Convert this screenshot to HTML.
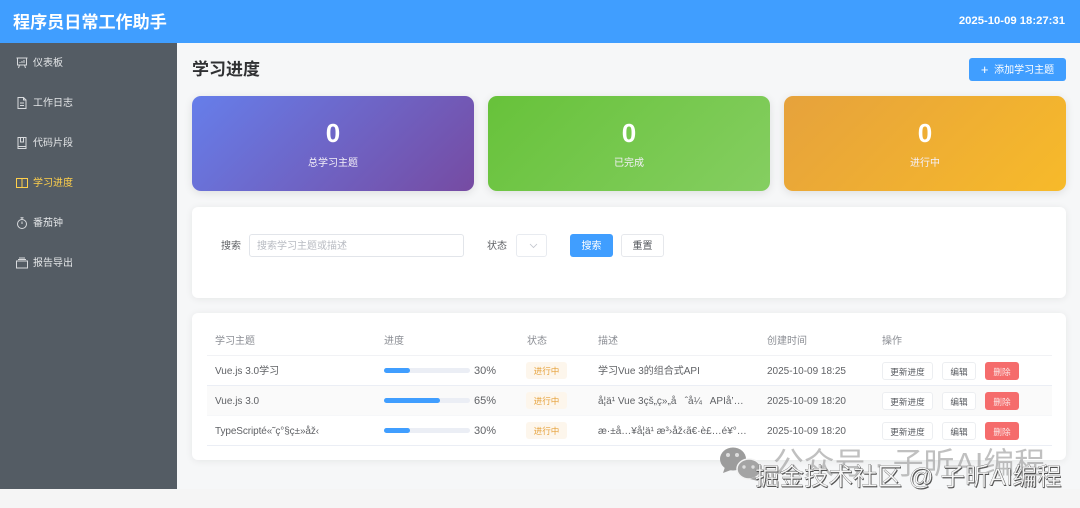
<!DOCTYPE html>
<html lang="zh-CN"><head><meta charset="utf-8"><title>程序员日常工作助手</title>
<style>
*{box-sizing:border-box}
html,body{margin:0;padding:0;background:#f5f5f5}
body{width:1080px;height:508px;overflow:hidden;font-family:"Liberation Sans","Noto Sans CJK SC",sans-serif;color:#606266}
#w{position:relative;width:1080px;height:508px;overflow:hidden;filter:blur(.35px)}
.a{position:absolute;white-space:pre;line-height:1}
.hd{position:absolute;left:0;top:0;width:1080px;height:43px;background:#409eff}
.sb{position:absolute;left:0;top:43px;width:177px;height:446px;background:#545c64}
.main{position:absolute;left:177px;top:43px;width:903px;height:446px;background:#f6f7f8}
.m{position:absolute;left:33px;font-size:10px;line-height:12px;color:#e4e6e8;white-space:pre}
svg.i{position:absolute;left:16px;width:12px;height:12px;fill:none;stroke:#d8dadd;stroke-width:1}
.card{position:absolute;background:#fff;border-radius:6px;box-shadow:0 1px 8px rgba(0,0,0,.07)}
.st{position:absolute;top:96px;width:282px;height:95px;border-radius:9px;color:#fff;text-align:center;box-shadow:0 2px 9px rgba(0,0,0,.1)}
.st b{position:absolute;left:0;right:0;top:23px;font-size:26px;line-height:28px}
.st span{position:absolute;left:0;right:0;top:60px;font-size:10px;line-height:13px;padding-top:1px;color:#f4f0f8}
.btn{position:absolute;border-radius:3px;text-align:center;white-space:pre}
.ln{position:absolute;left:207px;width:845px;height:1px;background:#ebeef5}
.t{position:absolute;font-size:10px;line-height:12px;white-space:pre;color:#606266}
.th{color:#8b8e94}
.tr{position:absolute;left:384px;width:86px;height:5px;border-radius:3px;background:#ebeef5}
.fl{height:5px;border-radius:3px;background:#409eff}
.tag{position:absolute;left:526px;width:41px;height:17px;border-radius:3px;background:#fdf6ec;color:#e6a23c;font-size:8.600px;line-height:18px;text-align:center}
.ob{height:18px;line-height:18px;font-size:8.600px;background:#fff;border:1px solid #eceef1;color:#55585e}
.db{height:18px;line-height:20px;font-size:8.600px;background:#f56c6c;color:#fbe3e3}
</style></head><body><div id="w">
<div class="main"></div>
<div class="hd"></div>
<div class="a" style="left:13px;top:14px;font-size:17.100px;font-weight:bold;color:#fff">程序员日常工作助手</div>
<div class="a" style="right:15px;top:16px;font-size:11.300px;font-weight:bold;color:#fff">2025-10-09 18:27:31</div>
<div class="sb"></div>

<svg class="i" style="top:57px" viewBox="0 0 12 12"><path d="M.5 1h11M1.500 1v7h9V1M3.500 8l-1 3M8.500 8l1 3M4 6V5M6 6V4M8 6V3"/></svg>
<div class="m" style="top:58px">仪表板</div>
<svg class="i" style="top:97px" viewBox="0 0 12 12"><path d="M2 .5h5.500L10 3v8.500H2zM7.500.5V3H10M4 6h4M4 8.500h4"/></svg>
<div class="m" style="top:98px">工作日志</div>
<svg class="i" style="top:137px" viewBox="0 0 12 12"><path d="M2 .5h8v11H2zM2 9.500h8M4.500.5v4.500h3V.5"/></svg>
<div class="m" style="top:138px">代码片段</div>
<svg class="i" style="top:177px;stroke:#ffd04b" viewBox="0 0 12 12"><path d="M.5 1.500h11v9H.5zM6 1.500v9"/></svg>
<div class="m" style="top:178px;color:#ffd04b">学习进度</div>
<svg class="i" style="top:217px" viewBox="0 0 12 12"><circle cx="6" cy="7" r="4.500"/><path d="M4.500.7h3M6 .7v1.800M6 7V4.500"/></svg>
<div class="m" style="top:218px">番茄钟</div>
<svg class="i" style="top:257px" viewBox="0 0 12 12"><path d="M.5 4h11v7H.5zM2 2.500h8M3 1h6"/></svg>
<div class="m" style="top:258px">报告导出</div>

<div class="a" style="left:192px;top:60px;font-size:17px;line-height:19px;font-weight:bold;color:#303133">学习进度</div>
<div class="btn" style="left:969px;top:58px;width:97px;height:23px;background:#409eff;color:#fff;font-size:10px;line-height:24px"><span style="font-size:13px;font-weight:normal;vertical-align:-1px">+</span>  添加学习主题</div>

<div class="st" style="left:192px;background:linear-gradient(135deg,#667eea,#764ba2)"><b>0</b><span>总学习主题</span></div>
<div class="st" style="left:488px;background:linear-gradient(135deg,#67c23a,#85ce61)"><b>0</b><span>已完成</span></div>
<div class="st" style="left:784px;background:linear-gradient(135deg,#e6a23c,#f7ba2a)"><b>0</b><span>进行中</span></div>

<div class="card" style="left:192px;top:207px;width:874px;height:91px"></div>
<div class="t" style="left:221px;top:241px">搜索</div>
<div class="a" style="left:249px;top:234px;width:215px;height:23px;background:#fff;border:1px solid #e2e5ea;border-radius:3px;padding-left:7px;font-size:10px;line-height:23px;color:#b8bbc2">搜索学习主题或描述</div>
<div class="t" style="left:487px;top:241px">状态</div>
<div class="a" style="left:516px;top:234px;width:31px;height:23px;background:#fff;border:1px solid #e8ebf0;border-radius:3px"></div>
<svg class="a" style="left:529px;top:243px;width:9px;height:6px" viewBox="0 0 9 6"><path d="M1 1l3.500 3.500L8 1" fill="none" stroke="#c0c4cc" stroke-width=".8"/></svg>
<div class="btn" style="left:570px;top:234px;width:43px;height:23px;background:#409eff;color:#fff;font-size:10px;line-height:25px">搜索</div>
<div class="btn" style="left:621px;top:234px;width:43px;height:23px;background:#fff;border:1px solid #e6e8ec;color:#55585e;font-size:10px;line-height:23px">重置</div>

<div class="card" style="left:192px;top:313px;width:874px;height:147px"></div>
<div style="position:absolute;left:207px;top:386px;width:845px;height:29px;background:#fafafa"></div>
<div class="ln" style="top:355px;background:#f1f2f5"></div><div class="ln" style="top:385px"></div><div class="ln" style="top:415px;background:#f6f7f9"></div><div class="ln" style="top:445px"></div>

<div class="t th" style="left:215px;top:336px">学习主题</div>
<div class="t th" style="left:384px;top:336px">进度</div>
<div class="t th" style="left:527px;top:336px">状态</div>
<div class="t th" style="left:598px;top:336px">描述</div>
<div class="t th" style="left:767px;top:336px">创建时间</div>
<div class="t th" style="left:882px;top:336px">操作</div>

<div class="t" style="left:215px;top:366px">Vue.js 3.0学习</div>
<div class="tr" style="top:368px"><div class="fl" style="width:26px"></div></div>
<div class="t" style="left:474px;top:365px;font-size:11px">30%</div>
<div class="tag" style="top:362px">进行中</div>
<div class="t" style="left:598px;top:366px">学习Vue 3的组合式API</div>
<div class="t" style="left:767px;top:366px">2025-10-09 18:25</div>
<div class="btn ob" style="left:882px;top:362px;width:51px">更新进度</div>
<div class="btn ob" style="left:942px;top:362px;width:34px">编辑</div>
<div class="btn db" style="left:985px;top:362px;width:34px">删除</div>

<div class="t" style="left:215px;top:396px">Vue.js 3.0</div>
<div class="tr" style="top:398px"><div class="fl" style="width:56px"></div></div>
<div class="t" style="left:474px;top:395px;font-size:11px">65%</div>
<div class="tag" style="top:392px">进行中</div>
<div class="t" style="left:598px;top:396px">å¦ä¹ Vue 3çš„ç»„å   ˆå¼   APIå’…</div>
<div class="t" style="left:767px;top:396px">2025-10-09 18:20</div>
<div class="btn ob" style="left:882px;top:392px;width:51px">更新进度</div>
<div class="btn ob" style="left:942px;top:392px;width:34px">编辑</div>
<div class="btn db" style="left:985px;top:392px;width:34px">删除</div>

<div class="t" style="left:215px;top:426px;letter-spacing:-.1px">TypeScripté«˜ç°§ç±»åž‹</div>
<div class="tr" style="top:428px"><div class="fl" style="width:26px"></div></div>
<div class="t" style="left:474px;top:425px;font-size:11px">30%</div>
<div class="tag" style="top:422px">进行中</div>
<div class="t" style="left:598px;top:426px">æ·±å…¥å¦ä¹ æ³›åž‹ã€·è£…é¥°…</div>
<div class="t" style="left:767px;top:426px">2025-10-09 18:20</div>
<div class="btn ob" style="left:882px;top:422px;width:51px">更新进度</div>
<div class="btn ob" style="left:942px;top:422px;width:34px">编辑</div>
<div class="btn db" style="left:985px;top:422px;width:34px">删除</div>

<svg class="a" style="left:718px;top:444px;width:46px;height:38px" viewBox="0 0 46 38"><ellipse cx="15" cy="15" rx="13" ry="11.500" fill="#9c9c9c"/><path d="M7 23l-2 6 8-3z" fill="#9c9c9c"/><ellipse cx="31" cy="25" rx="12" ry="10" fill="#a4a4a4" stroke="#f3f3f3" stroke-width="1.500"/><path d="M37 33l3 4-8-2z" fill="#a4a4a4"/><circle cx="10" cy="11" r="2" fill="#ddd"/><circle cx="19" cy="11" r="2" fill="#ddd"/><circle cx="26" cy="23" r="1.700" fill="#ddd"/><circle cx="35" cy="23" r="1.700" fill="#ddd"/></svg>
<div class="a" style="left:773px;top:447px;font-size:30.800px;line-height:34px;color:rgba(150,150,150,.6)">公众号 · 子昕AI编程</div>
<div class="a" style="left:755px;top:464px;font-size:24.500px;line-height:28px;color:#f6f6f6;-webkit-text-stroke:.25px #444;text-shadow:.8px .8px 0 #555">掘金技术社区 @ 子昕AI编程</div>
</div></body></html>
